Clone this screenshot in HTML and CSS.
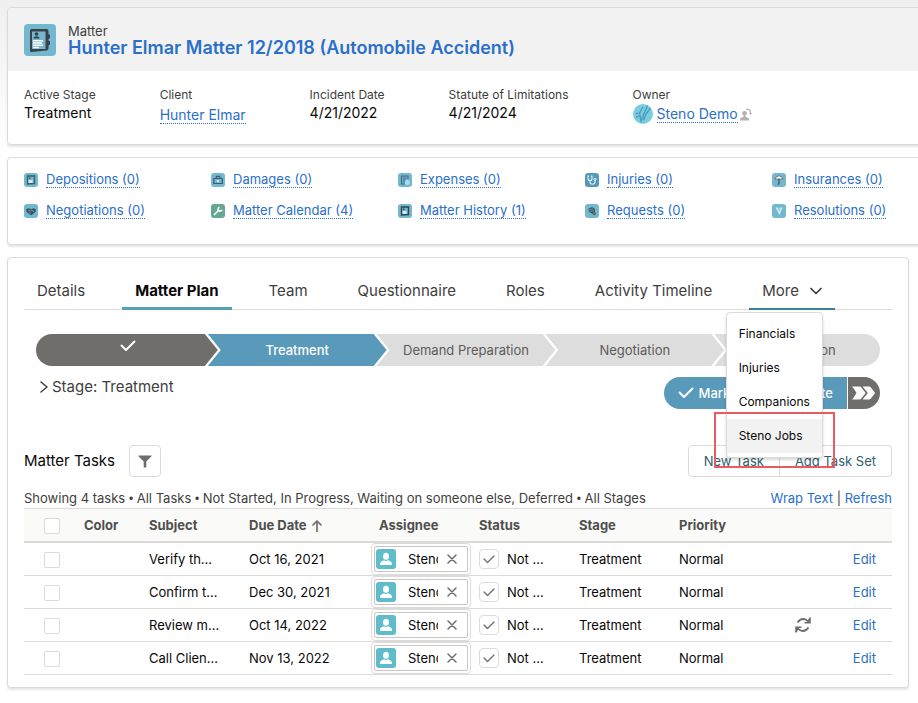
FILE: index.html
```html
<!DOCTYPE html>
<html lang="en">
<head>
<meta charset="utf-8">
<title>Hunter Elmar Matter 12/2018</title>
<link rel="stylesheet" href="styles.css">
</head>
<body>
<svg class="defs" aria-hidden="true">
  <symbol id="book" viewBox="0 0 32 32">
    <path fill="#3b4144" fill-rule="evenodd" d="M7.500 5h15a2 2 0 0 1 2 2v3l1.500 1v3l-1.500 1v1.500l1.500 1v3l-1.500 1v3a2 2 0 0 1-2 2l-15 1.500a1.500 1.500 0 0 1-1.500-1.500v-20a1.500 1.500 0 0 1 1.500-1.500zM8 7.500v17.500h13.500v-17.500z"/>
    <circle cx="12.500" cy="10" r="1.800" fill="#3b4144"/><path fill="#3b4144" d="M9.500 14.500c0-3 6-3 6 0z"/>
    <path stroke="#fff" stroke-width="1.500" d="M9 16.800h10M9 19h9M9 21.200h10M9 23.400h6"/>
  </symbol>
  <symbol id="check" viewBox="0 0 16 12"><path fill="none" stroke="currentColor" stroke-width="2" stroke-linecap="round" stroke-linejoin="round" d="M1.500 5.500l4.500 4.500 8.500-8.500"/></symbol>
  <symbol id="user" viewBox="0 0 20 20"><rect width="20" height="20" rx="3" fill="#5fbdcb"/><ellipse cx="10" cy="7.300" rx="3" ry="3.500" fill="#fff"/><path fill="#fff" d="M4 15.500v-.8c0-2 2.400-2.700 4-3.400q2 1.200 4 0c1.600.7 4 1.400 4 3.400v.8q0 .5-.6.500h-10.800q-.6 0-.6-.5z"/></symbol>
  <symbol id="cross" viewBox="0 0 10 10"><path fill="none" stroke="currentColor" stroke-width="1.500" stroke-linecap="round" d="M1 1l8 8M9 1l-8 8"/></symbol>
</svg>

<main class="page">
  <section class="card card-wide">
    <header class="record-head">
      <svg class="record-icon" viewBox="0 0 32 32" aria-hidden="true"><rect width="32" height="32" rx="4" fill="#73b7d0"/><use href="#book"/></svg>
      <div>
        <div class="record-type">Matter</div>
        <h1 class="record-name"><a href="#">Hunter Elmar Matter 12/2018 (Automobile Accident)</a></h1>
      </div>
    </header>
    <dl class="facts">
      <div><dt>Active Stage</dt><dd>Treatment</dd></div>
      <div><dt>Client</dt><dd class="fact-link"><a class="dotted" href="#">Hunter Elmar</a></dd></div>
      <div><dt>Incident Date</dt><dd>4/21/2022</dd></div>
      <div><dt>Statute of Limitations</dt><dd>4/21/2024</dd></div>
      <div><dt>Owner</dt>
        <dd class="owner">
          <svg class="avatar" viewBox="0 0 20 20" aria-hidden="true"><circle cx="10" cy="10" r="10" fill="#7bcbe2"/><g fill="none" stroke="#4a9cb8" stroke-width="1.300" stroke-linecap="round"><path d="M8 17.500l3-8L14.500 2M10.500 16l2.500-6 4-5.500M7 8l3-5M8 18l-1-7"/></g><g fill="#4a9cb8"><circle cx="4" cy="9.500" r="1"/><circle cx="6.500" cy="9" r="1"/><circle cx="4" cy="13" r="1"/><circle cx="6" cy="12" r="1"/></g></svg>
          <a class="dotted" href="#">Steno Demo</a>
          <button class="bare change-owner" aria-label="Change Owner"><svg width="12" height="13" viewBox="0 0 12 13"><g fill="#b3b2b1"><circle cx="4.500" cy="5.300" r="2.400"/><path d="M3.500 7h2v1.800l3 1.200q.5.400.5 2.500h-9q0-2.100.5-2.500l3-1.200z"/><path d="M9 5h3l-1.500 2z"/></g><path fill="none" stroke="#b3b2b1" stroke-width="1.300" d="M6 1.200q4.500-.2 4.500 4"/></svg></button>
        </dd></div>
    </dl>
  </section>

  <nav class="card card-wide quick-links" aria-label="Related lists">
    <div class="quick"><svg viewBox="0 0 14 14"><rect width="14" height="14" rx="3" fill="#73b7d0"/><path fill="none" stroke="#3b5e6b" stroke-width="1.400" d="M3.500 3h7v7.500l-7 .5z"/><path fill="#cfe8f1" d="M4.500 7h4v3h-4z"/><path fill="#3b5e6b" d="M5 4.500h1.500v1.500H5z"/></svg><a class="dotted" href="#">Depositions (0)</a></div>
    <div class="quick"><svg viewBox="0 0 14 14"><rect width="14" height="14" rx="3" fill="#73b7d0"/><path fill="none" stroke="#3b5e6b" stroke-width="1.200" d="M2.800 5.500h8.500v5H2.800zM5.300 5V3.300h3.400V5"/><path fill="#cfe8f1" d="M6 7h2v2H6z"/></svg><a class="dotted" href="#">Damages (0)</a></div>
    <div class="quick"><svg viewBox="0 0 14 14"><rect width="14" height="14" rx="3" fill="#73b7d0"/><path fill="none" stroke="#3b6b80" stroke-width="1.100" d="M10 6V3H3.500v8H7M5 5h3.500M5 7h2.500M5 9h2"/><circle cx="9.300" cy="9.500" r="2.500" fill="#acdcec"/></svg><a class="dotted" href="#">Expenses (0)</a></div>
    <div class="quick"><svg viewBox="0 0 14 14"><rect width="14" height="14" rx="3" fill="#5499b5"/><path fill="none" stroke="#e4f3f8" stroke-width="1.100" stroke-linecap="round" d="M3.800 3H3v2.500a2 2 0 0 0 4 0V3h-.8M5 7.700v1a2.500 2.500 0 0 0 5 0V7.500"/><circle cx="10" cy="6.300" r="1.100" fill="none" stroke="#e4f3f8"/></svg><a class="dotted" href="#">Injuries (0)</a></div>
    <div class="quick"><svg viewBox="0 0 14 14"><rect width="14" height="14" rx="3" fill="#73b7d0"/><path fill="#f4f8f9" stroke="#596064" stroke-width=".8" d="M3 6.200q.5-3.200 4-3.400 3.500.2 4 3.400-1.500-.7-2.600 0-1.400-.7-2.800 0-1.100-.7-2.600 0z"/><path fill="none" stroke="#4a4a4a" stroke-width="1.200" d="M7 6v4.500q-.1 1-1.300.7"/></svg><a class="dotted" href="#">Insurances (0)</a></div>
    <div class="quick"><svg viewBox="0 0 14 14"><rect width="14" height="14" rx="3" fill="#73b7d0"/><path fill="#3b5560" d="M2 5.500l2-1.300 3 .7 3-.7 2 1.300-.7 2.500-3.500 3-1.500 0-3.600-3z"/><path fill="none" stroke="#73b7d0" stroke-width=".8" d="M4.500 6.500q2 1 3.300-.5L10 8M5 8.500l1.500 1.200"/></svg><a class="dotted" href="#">Negotiations (0)</a></div>
    <div class="quick"><svg viewBox="0 0 14 14"><rect width="14" height="14" rx="3" fill="#64a894"/><path stroke="#fff" stroke-width="1.700" stroke-linecap="round" d="M3.500 10.500l4-4"/><path fill="none" stroke="#fff" stroke-width="1.600" d="M8.500 3.200a2 2 0 1 0 2.500 2.500"/></svg><a class="dotted" href="#">Matter Calendar (4)</a></div>
    <div class="quick"><svg viewBox="0 0 14 14"><rect width="14" height="14" rx="3" fill="#73b7d0"/><path fill="none" stroke="#30434a" stroke-width="1.400" d="M3.500 3h7v7.500l-7 .5z"/><path fill="#cfe8f1" d="M4.500 7h4v3h-4z"/><path fill="#30434a" d="M5 4.500h1.500v1.500H5z"/></svg><a class="dotted" href="#">Matter History (1)</a></div>
    <div class="quick"><svg viewBox="0 0 14 14"><rect width="14" height="14" rx="3" fill="#73b7d0"/><path fill="#3f5a66" d="M3.500 4.500L7 3l3 2v3l1 1.500-1.500 2L7 9.500 4 8z"/><path stroke="#73b7d0" stroke-width=".6" d="M4 6l4-1.500M5 7.500l4-1"/><path fill="#b0705f" d="M8 8.500h2v1H8z"/></svg><a class="dotted" href="#">Requests (0)</a></div>
    <div class="quick"><svg viewBox="0 0 14 14"><rect width="14" height="14" rx="3" fill="#73b7d0"/><path fill="#d9eef5" d="M3.500 3.500h2L7 8l-.5-4.500h1L7.300 8l1.500-4.500h1.700L7.500 11z"/></svg><a class="dotted" href="#">Resolutions (0)</a></div>
  </nav>

  <section class="card plan">
    <nav class="tabs" aria-label="Matter sections">
      <a class="tab" href="#">Details</a>
      <a class="tab tab-active" href="#" aria-current="page">Matter Plan</a>
      <a class="tab" href="#">Team</a>
      <a class="tab" href="#">Questionnaire</a>
      <a class="tab" href="#">Roles</a>
      <a class="tab" href="#">Activity Timeline</a>
      <div class="more">
        <button class="tab tab-more" aria-expanded="true">More <svg width="12" height="8" viewBox="0 0 12 8" aria-hidden="true"><path fill="none" stroke="currentColor" stroke-width="1.700" stroke-linecap="round" stroke-linejoin="round" d="M1 1.500l5 5 5-5"/></svg></button>
        <div class="menu">
          <a href="#">Financials</a>
          <a href="#">Injuries</a>
          <a href="#">Companions</a>
          <a class="menu-current" href="#">Steno Jobs</a>
        </div>
      </div>
    </nav>

    <ol class="path">
      <li class="step step-done"><svg width="16" height="12" role="img" aria-label="Stage complete"><use href="#check"/></svg></li>
      <li class="step step-current"><span>Treatment</span></li>
      <li class="step"><span>Demand Preparation</span></li>
      <li class="step"><span>Negotiation</span></li>
      <li class="step"><span>Resolution</span></li>
    </ol>

    <div class="stage-row">
      <button class="bare stage-toggle"><svg width="8" height="12" viewBox="0 0 8 12" aria-hidden="true"><path fill="none" stroke="currentColor" stroke-width="1.500" stroke-linecap="round" stroke-linejoin="round" d="M1 1l6 5-6 5"/></svg>Stage: Treatment</button>
      <div class="stage-actions">
        <button class="mark"><svg width="16" height="12" aria-hidden="true"><use href="#check"/></svg>Mark Stage Complete</button>
        <button class="skip" aria-label="Next stage"><svg width="24" height="14" viewBox="0 0 24 14"><path fill="#fff" d="M0 .5h7.500q1 0 1.600.8l4 5q.5.700 0 1.400l-4 5q-.6.800-1.600.8H0q1.200-1 2-2.500L4.500 7 2 3Q1.200 1.500 0 .5zM10.500.5h6.500q1 0 1.600.8l4 5q.5.700 0 1.400l-4 5q-.6.800-1.600.8h-6.500l4.800-5.800q.5-.7 0-1.400z"/></svg></button>
      </div>
    </div>

    <div class="tasks-head">
      <h2>Matter Tasks</h2>
      <button class="filter" aria-label="Filter tasks"><svg width="14" height="13" viewBox="0 0 14 13"><path fill="#6e6d6a" d="M.5.500h13q.3.300 0 .7L8.300 6.500V12q0 .5-.5.500H6.200q-.5 0-.5-.5V6.500L.5 1.200q-.3-.4 0-.7z"/></svg></button>
      <div class="task-buttons"><button>New Task</button><button>Add Task Set</button></div>
    </div>

    <div class="summary">
      <span>Showing 4 tasks <span class="dot">•</span> All Tasks <span class="dot">•</span> Not Started, In Progress, Waiting on someone else, Deferred <span class="dot">•</span> All Stages</span>
      <span class="summary-links"><a href="#">Wrap Text</a> | <a href="#">Refresh</a></span>
    </div>

    <table class="tasks">
      <colgroup><col class="c-check"><col class="c-color"><col class="c-std"><col class="c-due"><col class="c-std"><col class="c-std"><col class="c-std"><col class="c-std"><col class="c-repeat"><col></colgroup>
      <thead>
        <tr><th><input type="checkbox" aria-label="Select all tasks"></th><th>Color</th><th>Subject</th><th>Due Date <svg class="sort" width="10" height="12" viewBox="0 0 10 12" aria-label="Sorted ascending"><path fill="none" stroke="#706e6b" stroke-width="1.700" stroke-linecap="round" stroke-linejoin="round" d="M5 11.500V1M1 5l4-4 4 4"/></svg></th><th>Assignee</th><th>Status</th><th>Stage</th><th>Priority</th><th></th><th></th></tr>
      </thead>
      <tbody>
        <tr><td><input type="checkbox" aria-label="Select task"></td><td></td><td>Verify th...</td><td>Oct 16, 2021</td>
          <td class="assignee"><div class="lookup"><div class="pill"><svg width="20" height="20"><use href="#user"/></svg><span>Steno Demo</span><button class="bare" aria-label="Remove assignee"><svg width="10" height="10"><use href="#cross"/></svg></button></div></div></td>
          <td><div class="status"><button aria-label="Mark complete"><svg width="12" height="9" viewBox="0 0 12 9"><path class="tick" d="M1 4l3.500 3.500L11 1"/></svg></button>Not ...</div></td><td>Treatment</td><td>Normal</td><td></td><td class="edit"><a href="#">Edit</a></td></tr>
        <tr><td><input type="checkbox" aria-label="Select task"></td><td></td><td>Confirm t...</td><td>Dec 30, 2021</td>
          <td class="assignee"><div class="lookup"><div class="pill"><svg width="20" height="20"><use href="#user"/></svg><span>Steno Demo</span><button class="bare" aria-label="Remove assignee"><svg width="10" height="10"><use href="#cross"/></svg></button></div></div></td>
          <td><div class="status"><button aria-label="Mark complete"><svg width="12" height="9" viewBox="0 0 12 9"><path class="tick" d="M1 4l3.500 3.500L11 1"/></svg></button>Not ...</div></td><td>Treatment</td><td>Normal</td><td></td><td class="edit"><a href="#">Edit</a></td></tr>
        <tr><td><input type="checkbox" aria-label="Select task"></td><td></td><td>Review m...</td><td>Oct 14, 2022</td>
          <td class="assignee"><div class="lookup"><div class="pill"><svg width="20" height="20"><use href="#user"/></svg><span>Steno Demo</span><button class="bare" aria-label="Remove assignee"><svg width="10" height="10"><use href="#cross"/></svg></button></div></div></td>
          <td><div class="status"><button aria-label="Mark complete"><svg width="12" height="9" viewBox="0 0 12 9"><path class="tick" d="M1 4l3.500 3.500L11 1"/></svg></button>Not ...</div></td><td>Treatment</td><td>Normal</td>
          <td class="repeat"><svg width="16" height="16" viewBox="0 0 16 16" role="img" aria-label="Recurring"><path fill="none" stroke="#706e6b" stroke-width="1.800" d="M2.500 5.500Q5 1.800 8.500 2q2.500.1 4.500 2.500M13.500 10.500Q11 14.200 7.500 14 5 13.900 3 11.500"/><path fill="#706e6b" d="M14.300.5h1.500v6H9.500V5h2.500zM1.700 15.500H.2v-6h6.300V11H4z"/></svg></td><td class="edit"><a href="#">Edit</a></td></tr>
        <tr><td><input type="checkbox" aria-label="Select task"></td><td></td><td>Call Clien...</td><td>Nov 13, 2022</td>
          <td class="assignee"><div class="lookup"><div class="pill"><svg width="20" height="20"><use href="#user"/></svg><span>Steno Demo</span><button class="bare" aria-label="Remove assignee"><svg width="10" height="10"><use href="#cross"/></svg></button></div></div></td>
          <td><div class="status"><button aria-label="Mark complete"><svg width="12" height="9" viewBox="0 0 12 9"><path class="tick" d="M1 4l3.500 3.500L11 1"/></svg></button>Not ...</div></td><td>Treatment</td><td>Normal</td><td></td><td class="edit"><a href="#">Edit</a></td></tr>
      </tbody>
    </table>
  </section>
</main>
</body>
</html>
```

FILE: styles.css
```css
* { box-sizing: border-box; }

body {
  margin: 0;
  font: 13px/20px Inter, "Liberation Sans", sans-serif;
  color: #080707;
  background: linear-gradient(#efefef, #fff 150px) no-repeat #fff;
}

a { color: #2a6fca; text-decoration: none; }
button { font: inherit; color: inherit; cursor: pointer; }
svg { flex: none; display: block; }
h1, h2, dl, dd, ol { margin: 0; padding: 0; }

.defs { display: none; }

.bare { padding: 0; border: 0; background: none; }

.dotted { border-bottom: 1px dotted #2a6fca; }

.page {
  display: flex;
  flex-direction: column;
  gap: 12px;
  padding: 7px 9px 15px 7px;
  overflow-x: clip;
}

.card {
  background: #fff;
  border: 1px solid #dddbda;
  border-radius: 4px;
  box-shadow: 0 2px 2px rgba(0, 0, 0, 0.1);
}

.card-wide { margin-right: -16px; }

/* Record header */
.record-head {
  display: flex;
  gap: 12px;
  padding: 16px;
  height: 63px;
  background: #f2f2f2;
  border-radius: 3px 3px 0 0;
}

.record-icon { width: 32px; height: 32px; }
.record-type { line-height: 14px; color: #3e3e3c; }
.record-name { font-size: 18px; line-height: 20px; font-weight: 600; }

.facts {
  display: flex;
  gap: 64px;
  min-height: 73px;
  padding: 15px 16px 14px;
}

.facts dt { font-size: 12px; line-height: 18px; color: #3e3e3c; }
.facts dd { font-size: 14px; line-height: 18px; }
.facts .dotted { display: inline-block; line-height: 17px; }
.facts .fact-link { padding-top: 2px; }
.facts .owner { display: flex; align-items: center; height: 20px; }
.avatar { width: 20px; height: 20px; margin-right: 4px; }
.change-owner { margin-left: 2px; }

/* Related list links */
.quick-links {
  display: grid;
  grid-template-columns: repeat(5, 187px);
  row-gap: 15px;
  padding: 14px 16px 25px;
  overflow: hidden;
}

.quick { display: flex; align-items: center; gap: 8px; height: 16px; }
.quick svg { width: 14px; height: 14px; }
.quick .dotted { line-height: 15px; }

/* Tabs */
.plan { padding: 16px; padding-bottom: 12px; }

.tabs {
  display: flex;
  gap: 24px;
  height: 36px;
  border-bottom: 1px solid #dddbda;
}

.tab {
  height: 36px;
  padding: 0 13px;
  border: 0;
  border-bottom: 3px solid transparent;
  background: none;
  font-size: 15px;
  line-height: 34px;
  color: #3e3e3c;
  white-space: nowrap;
}

.tab-active { font-weight: 700; color: #080707; border-color: #56a0b4; }
.tab-more {
  display: flex;
  align-items: center;
  gap: 11px;
  border-bottom: 2px solid #3e8093;
}

.more { position: relative; }

.menu {
  position: absolute;
  z-index: 2;
  top: 38px;
  right: 12px;
  padding: 4px 0;
  background: #fff;
  border: 1px solid #dddbda;
  border-radius: 4px;
  box-shadow: 0 2px 3px rgba(0, 0, 0, 0.16);
}

.menu a {
  display: block;
  padding: 0 12px;
  font-size: 12px;
  line-height: 34px;
  color: #080707;
}

.menu .menu-current { position: relative; background: #f3f2f2; }
.menu-current::after {
  content: "";
  position: absolute;
  inset: -7px -13px -15px;
  border: 2px solid #ea5a62;
}

/* Stage path */
.path {
  display: flex;
  height: 32px;
  margin: 24px 12px 0;
  border-radius: 16px;
  overflow: hidden;
  list-style: none;
}

.step {
  position: relative;
  flex: 1;
  display: flex;
  align-items: center;
  justify-content: center;
  padding-left: 16px;
  color: #5c5b59;
}

.step::before {
  content: "";
  position: absolute;
  inset: 0 -13px 0 3px;
  background: #dddddd;
  clip-path: polygon(0 0, calc(100% - 13px) 0, 100% 50%, calc(100% - 13px) 100%, 0 100%, 13px 50%);
}

.step:first-child::before {
  left: 0;
  clip-path: polygon(0 0, calc(100% - 13px) 0, 100% 50%, calc(100% - 13px) 100%, 0 100%);
}

.step > * { position: relative; }
.step-done { color: #fff; align-items: flex-start; padding-top: 6px; }
.step-done::before { background: #706e6b; }
.step-current { color: #fff; font-weight: 500; }
.step-current::before { background: #5999b9; }

.stage-row {
  display: flex;
  justify-content: space-between;
  align-items: flex-start;
  margin: 11px 12px 0 16px;
}

.stage-toggle {
  display: flex;
  align-items: center;
  gap: 4px;
  font-size: 15px;
  line-height: 20px;
  color: #3e3e3c;
}

.stage-actions { display: flex; gap: 1px; color: #fff; }
.stage-actions button { display: flex; align-items: center; height: 32px; border: 0; }
.mark { gap: 5px; padding: 0 14px; border-radius: 16px 0 0 16px; background: #5999b9; font-weight: 500; }
.skip { padding: 0 4px; border-radius: 0 16px 16px 0; background: #706e6b; }

/* Tasks */
.tasks-head { display: flex; align-items: center; gap: 14px; margin-top: 36px; }
.tasks-head h2 { font-size: 15px; font-weight: 400; }

.filter {
  display: grid;
  place-items: center;
  width: 32px;
  height: 32px;
  padding: 0;
  background: #fff;
  border: 1px solid #dddbda;
  border-radius: 4px;
}

.task-buttons { display: flex; margin-left: auto; }
.task-buttons button {
  height: 32px;
  padding: 0 15px;
  background: #fff;
  border: 1px solid #dddbda;
  color: #2f5f6f;
}
.task-buttons button:first-child { border-radius: 4px 0 0 4px; }
.task-buttons button:last-child { border-left: 0; border-radius: 0 4px 4px 0; }

.summary {
  display: flex;
  justify-content: space-between;
  margin-top: 12px;
  line-height: 19px;
  color: #3e3e3c;
  white-space: nowrap;
}

.dot { font-family: "Liberation Sans", sans-serif; font-size: 12px; line-height: 1; }

.tasks { width: 100%; table-layout: fixed; border-collapse: separate; border-spacing: 0; }
.c-check { width: 52px; }
.c-color { width: 65px; }
.c-std { width: 100px; }
.c-due { width: 130px; }
.c-repeat { width: 65px; }

.tasks th, .tasks td {
  height: 33px;
  padding: 0 8px;
  border-bottom: 1px solid #dddbda;
  text-align: left;
  white-space: nowrap;
}

.tasks th {
  height: 35px;
  background: #fafaf9;
  border-top: 1px solid #dddbda;
  border-bottom-width: 2px;
  color: #514f4d;
  font-weight: 700;
}

.sort { display: inline-block; vertical-align: -2px; margin-left: 2px; }

.tasks input {
  display: block;
  appearance: none;
  width: 16px;
  height: 16px;
  margin: 1px 0 0 12px;
  background: #fff;
  border: 1px solid #dddbda;
  border-radius: 2px;
}

.tasks .assignee { padding: 0; }

.lookup {
  height: 32px;
  padding: 2px;
  border: 1px solid #dddbda;
  border-radius: 4px;
}

.pill {
  display: flex;
  align-items: center;
  height: 26px;
  padding: 0 10px 0 1px;
  border: 1px solid #c9c7c5;
  border-radius: 2px;
}

.pill span { flex: 1; min-width: 0; margin: 0 9px 0 12px; overflow: hidden; }
.pill .bare { color: #706e6b; }

.status { display: flex; align-items: center; gap: 8px; }
.status button {
  display: grid;
  place-items: center;
  width: 20px;
  height: 20px;
  padding: 0;
  background: #fff;
  border: 1px solid #dddbda;
  border-radius: 4px;
}

.tick { fill: none; stroke: #706e6b; stroke-width: 1.3; stroke-linecap: round; stroke-linejoin: round; }

.tasks .repeat svg { margin-left: 16px; }
.tasks .edit { padding-right: 16px; text-align: right; }
```
